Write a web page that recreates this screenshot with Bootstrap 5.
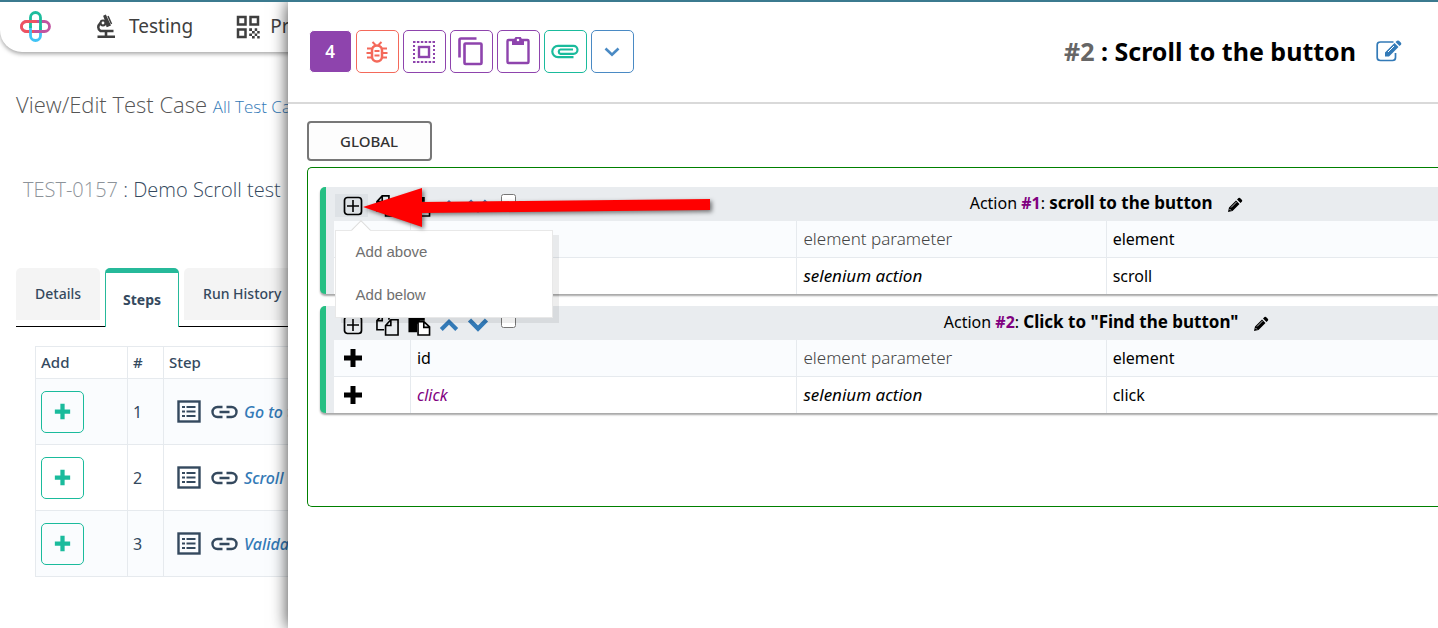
<!DOCTYPE html>
<html lang="en">
<head>
<meta charset="utf-8">
<meta name="viewport" content="width=device-width, initial-scale=1">
<title>View/Edit Test Case</title>
<link href="https://cdn.jsdelivr.net/npm/bootstrap@5.3.0/dist/css/bootstrap.min.css" rel="stylesheet">
<style>
  :root { --teal: #1abb9c; --navy: #34495e; --line: #e6eaee; --blue: #337ab7; --violet: #8e44ad; --bar: #e9ecef; }
  body { font-family: "Noto Sans", sans-serif; font-size: 16px; line-height: 24px; color: #000; border-top: 2px solid #3b7a8f; min-height: 100vh; overflow: hidden; }
  svg { display: block; flex: none; }
  a { text-decoration: none; color: var(--blue); }

  .page-pane { flex: 0 0 20%; overflow: hidden; white-space: nowrap; }
  .top-nav { height: 50px; border-bottom-left-radius: 22px; box-shadow: 0 2px 4px rgba(0,0,0,.35); width: 400px; padding: 0 0 2px 20px; }
  .top-nav a { color: #3f3f3f; font-size: 19px; gap: 10px; }
  .nav-first { margin-left: 43px; margin-right: 42px; }
  .page-title { font-family: "Open Sans", sans-serif; font-size: 22px; font-weight: 300; color: #555; line-height: 32px; margin: 36px 0 0 16px; }
  .page-title a { font-size: 17px; }
  .case-name { font-family: "Open Sans", sans-serif; font-size: 20px; font-weight: 300; color: #34495e; line-height: 28px; margin: 53px 0 0 23px; }
  .case-name span { color: #8d939a; }
  .case-tabs { margin: 64px 0 0 16px; height: 59px; border-bottom: 1px solid #000; width: 400px; font-size: 14px; gap: 5px; }
  .case-tabs a { color: var(--navy); font-weight: 500; background: #f4f4f4; border-radius: 5px 5px 0 0; padding: 0 19px; height: 52px; line-height: 52px; }
  .case-tabs a.current { background: #fff; font-weight: 700; border: 1px solid #26b99a; border-top-width: 5px; border-bottom: 0; height: 59px; line-height: 54px; padding: 0 17px; }
  .steps { margin: 19px 0 0 35px; width: 420px; table-layout: fixed; border-color: var(--line); color: var(--navy); }
  .steps th { font-weight: 500; font-size: 15px; padding: 0 5px 2px; height: 32px; }
  .steps td { height: 66px; padding: 0 5px; vertical-align: middle; font-size: 16px; }
  .steps tbody tr:nth-child(odd) td { background: #fafcfe; }
  .steps .c-add { width: 92px; } .steps .c-num { width: 36px; }
  .add-btn { display: block; width: 43px; height: 42px; border: 1px solid var(--teal); border-radius: 5px; background: transparent; padding: 0; color: var(--teal); }
  .steps a { font-style: italic; font-weight: 500; font-size: 16px; }

  .drawer { min-width: 0; position: relative; z-index: 2; box-shadow: 0 0 16px rgba(0,0,0,.75); min-height: calc(100vh - 2px); }
  .drawer-head { height: 102px; border-bottom: 2px solid #d9d9d9; padding: 28px 36px 0 21px; }
  .tool { width: 43px; height: 43px; border: 1px solid currentColor; border-radius: 5px; background: #fff; padding: 0; }
  .tools { gap: 4px; }
  .violet { color: var(--violet); } .coral { color: #f4695a; } .mint { color: var(--teal); } .sky { color: #4a8ac4; }
  .tool.count { background: var(--violet); color: #fff; font-weight: 600; font-size: 17px; }
  .drawer h2 { font-size: 25px; line-height: 34px; font-weight: 700; }
  .drawer h2 span { color: #666; }
  .drawer-body { padding: 17px 0 0 19px; }
  .global-btn { width: 125px; height: 40px; border: 2px solid #777; border-radius: 4px; background: #fdfdfd; color: #333; font-size: 15px; font-weight: 500; }
  .scope { border: 1px solid green; border-right: 0; border-radius: 5px 0 0 5px; margin-top: 6px; padding: 19px 0 93px 12px; }
  .action-card { border-left: 6px solid #26bf83; border-radius: 5px 0 0 5px; background: var(--bar); padding-left: 8px; box-shadow: 0 2px 2px rgba(0,0,0,.35); margin-bottom: 12px; }
  .params { width: 100%; table-layout: fixed; border-collapse: separate; border-spacing: 0; }
  .params th { height: 34px; font-weight: 400; padding: 0; }
  .params th.caption-cell { padding: 0 23px 2px 0; text-align: center; white-space: nowrap; }
  .params td { height: 36px; padding: 0 6px 1px; background: #fff; border-right: 1px solid var(--line); }
  .params td:first-child { padding-left: 9px; }
  .params td:last-child { border-right: 0; }
  .params tr:nth-child(1) td { background: #fafcfe; height: 37px; border-bottom: 1px solid var(--line); }
  .caption-cell b { font-weight: 700; font-size: 17px; }
  .caption-cell .purple { font-size: 16px; }
  .caption-cell svg { margin-left: 10px; }
  .purple { color: purple; }
  .params .soft { color: #444; font-weight: 300; font-size: 17px; }
  .params .verb { font-size: 17px; }
  .icon-bar { position: relative; height: 34px; padding: 3px 0 0 1px; }
  .icon-bar button { border: 0; background: none; padding: 0; height: 23px; color: #000; }
  .icon-bar .plus-btn { width: 33px; padding-left: 8px; }
  .icon-bar .plus-btn.on { background: #dee2e6; }
  .icon-bar input { width: 15px; height: 15px; margin: 0 0 0 12px; }
  .mini-menu { position: absolute; z-index: 4; top: 43px; left: 1px; width: 218px; height: 88px; background: #fff; border: 1px solid #e8e8e8; box-shadow: 6px 5px 0 rgba(0,0,0,.07); padding: 0 0 0 20px; font-family: "Liberation Sans", Arial, sans-serif; font-size: 15px; }
  .mini-menu a { position: relative; display: block; color: #707070; line-height: 42px; height: 43px; font-weight: 400; }
  .mini-menu::before { content: ""; position: absolute; left: 18px; top: -8px; width: 14px; height: 14px; background: #fff; border: solid #ddd; border-width: 1px 0 0 1px; transform: rotate(45deg); }
  .pointer-arrow { position: absolute; z-index: 5; left: 28px; top: 0; filter: drop-shadow(2px 2px 2px rgba(0,0,0,.5)); pointer-events: none; }
</style>
</head>
<body>
<svg class="d-none" aria-hidden="true">
  <symbol id="i-boxplus" viewBox="0 0 20 20"><rect x="1.5" y="1.5" width="17" height="17" rx="3" fill="none" stroke="currentColor" stroke-width="1.7"/><path d="M10 4v12M4 10h12" stroke="currentColor" stroke-width="1.6"/></symbol>
  <symbol id="i-files" viewBox="0 0 24 24"><g fill="none" stroke="currentColor" stroke-width="1.7"><path d="M8.500 17.500H1V8L6.500 2H13.500V7M6.500 2V8H1"/><path d="M10 13L15.500 7H23V23H10ZM15.500 7V13H10"/></g></symbol>
  <symbol id="i-paste" viewBox="0 0 24 24"><path d="M1 3H6V1H13V3H18V8H13L10 12V20H1Z" fill="currentColor"/><path d="M11 9H17L23 14.500V23H11ZM17 9V15H23" fill="#fff" stroke="currentColor" stroke-width="1.700"/></symbol>
  <symbol id="i-up" viewBox="0 0 22 16"><path d="M2.500 13L11 4.500L19.500 13" fill="none" stroke="#337ab7" stroke-width="4.500"/></symbol>
  <symbol id="i-down" viewBox="0 0 22 16"><path d="M2.500 3L11 11.500L19.500 3" fill="none" stroke="#337ab7" stroke-width="4.500"/></symbol>
  <symbol id="i-plus" viewBox="0 0 20 20"><path d="M10 1v18M1 10h18" stroke="currentColor" stroke-width="5"/></symbol>
  <symbol id="i-pencil" viewBox="0 0 16 16"><path d="M1 15L2 10.500L9 3.500L12.500 7L5.500 14ZM10 2.500L11.500 1Q12.300.5 13 1L15 3Q15.500 3.800 15 4.500L13.500 6Z" fill="currentColor"/><path d="M4 10.500L9.500 5M2.500 12L4 13.500" stroke="#e9ecef" stroke-width=".8"/></symbol>
  <symbol id="i-list" viewBox="0 0 24 24"><rect x="1.500" y="1.500" width="21" height="20" fill="none" stroke="currentColor" stroke-width="2.400"/><path d="M5 7h3M5 11.500h3M5 16h3M9.500 7h9M9.500 11.500h9M9.500 16h9" stroke="currentColor" stroke-width="1.900"/></symbol>
  <symbol id="i-link" viewBox="0 0 26 14"><path d="M11 2H6A5 5 0 0 0 6 12H11M15 2H20A5 5 0 0 1 20 12H15M8 7H18" fill="none" stroke="currentColor" stroke-width="2.400"/></symbol>
</svg>

<div class="d-flex">
  <section class="page-pane">
    <nav class="top-nav d-flex align-items-center bg-white">
      <svg width="31" height="31" viewBox="0 0 31 31" fill="none" stroke-width="2.800"><rect x="1.500" y="10.500" width="28" height="10" rx="5" stroke="#c054a0"/><path d="M16 10.500H6.500A5 5 0 0 0 6.500 20.500H16" stroke="#ef5360"/><path d="M10.500 15V24.500A5 5 0 0 0 20.500 24.500V15" stroke="#3fc3f5"/><path d="M10.500 17V6.500A5 5 0 0 1 20.500 6.500V19" stroke="#1dbd9d"/><path d="M8 10.500H17" stroke="#ef5360"/><path d="M14 20.500H24" stroke="#c054a0"/></svg>
      <a href="#" class="nav-first d-flex align-items-center">
        <svg width="25" height="25" viewBox="0 0 25 25" fill="none" stroke="currentColor"><path d="M3.500 22.800H21M12 22V17.500" stroke-width="2.600"/><path d="M6.500 9Q2 13.500 6.500 17H19.500" stroke-width="2.500"/><path d="M9.500 2.500L11.500 1.500L16 11L12.500 12.500" fill="currentColor" stroke-width="1.500"/><circle cx="9" cy="9" r="2.400" fill="#fff" stroke-width="2"/><path d="M14 2L17.500 10" stroke-width="1.500"/></svg>
        <span>Testing</span></a>
      <a href="#" class="d-flex align-items-center">
        <svg width="25" height="25" viewBox="0 0 25 25" fill="none" stroke="currentColor" stroke-width="2.500"><path d="M3 3h7.500v7.500H3zM15.500 3H23v7.500h-7.500zM3 15.500h7.500V23H3z"/><path d="M14.200 15.600h2.800m2.700 0h2.500M17 18.200h2.700m2.500 0h2.500M14.200 20.800H17m2.700 0h2.500M17 23.200h2.700m2.500 0h2.500" stroke-width="2.600"/></svg>
        <span>Projects</span></a>
    </nav>
    <h1 class="page-title">View/Edit Test Case <a href="#">All Test Cases</a></h1>
    <p class="case-name mb-0"><span>TEST-0157</span> : Demo Scroll test</p>
    <div class="case-tabs d-flex">
      <a href="#">Details</a><a href="#" class="current">Steps</a><a href="#">Run History</a>
    </div>
    <table class="steps table-bordered">
      <thead><tr><th class="c-add">Add</th><th class="c-num">#</th><th>Step</th></tr></thead>
      <tbody>
        <tr><td><button class="add-btn" aria-label="Add step"><svg class="m-auto" width="17" height="17"><use href="#i-plus"/></svg></button></td><td>1</td>
          <td><div class="d-flex align-items-center ps-2"><svg width="24" height="24"><use href="#i-list"/></svg><svg class="ms-2 me-1" width="31" height="14"><use href="#i-link"/></svg><a href="#">Go to the page</a></div></td></tr>
        <tr><td><button class="add-btn" aria-label="Add step"><svg class="m-auto" width="17" height="17"><use href="#i-plus"/></svg></button></td><td>2</td>
          <td><div class="d-flex align-items-center ps-2"><svg width="24" height="24"><use href="#i-list"/></svg><svg class="ms-2 me-1" width="31" height="14"><use href="#i-link"/></svg><a href="#">Scroll to the button</a></div></td></tr>
        <tr><td><button class="add-btn" aria-label="Add step"><svg class="m-auto" width="17" height="17"><use href="#i-plus"/></svg></button></td><td>3</td>
          <td><div class="d-flex align-items-center ps-2"><svg width="24" height="24"><use href="#i-list"/></svg><svg class="ms-2 me-1" width="31" height="14"><use href="#i-link"/></svg><a href="#">Validate</a></div></td></tr>
      </tbody>
    </table>
  </section>

  <main class="drawer flex-grow-1 bg-white">
    <header class="drawer-head d-flex justify-content-between align-items-start">
      <div class="tools d-flex">
        <button class="tool count">4</button>
        <button class="tool coral" aria-label="Debug"><svg class="m-auto" width="24" height="24" viewBox="0 0 24 24" fill="none" stroke="currentColor"><path d="M12 5.500C8.500 5.500 7 8 7 10.500V16.500A5 5 0 0 0 17 16.500V10.500C17 8 15.500 5.500 12 5.500Z" stroke-width="2.500"/><path d="M7.500 2L10.500 5M16.500 2L13.500 5M2 8.500H7M17 8.500H22M1.500 13H7M17 13H22.500M2 17.500H7M17 17.500H22M9.500 11H14.500M9.500 15.500H14.500" stroke-width="2"/></svg></button>
        <button class="tool violet" aria-label="Select all"><svg class="m-auto" width="24" height="24" viewBox="0 0 24 24" fill="none" stroke="currentColor" stroke-width="2"><path d="M1 2H23M1 22H23" stroke-dasharray="2.500 1.400"/><path d="M2 5V20M22 5V20" stroke-dasharray="2 2"/><rect x="7" y="7" width="10" height="10" stroke-width="2.400"/></svg></button>
        <button class="tool violet" aria-label="Copy"><svg class="m-auto" width="28" height="30" viewBox="0 0 28 30" fill="none" stroke="currentColor" stroke-width="2.600"><path d="M2.500 20.500V3Q2.500 1.500 4 1.500H19.500"/><rect x="7.500" y="6.500" width="17" height="20.500" rx="1"/></svg></button>
        <button class="tool violet" aria-label="Paste"><svg class="m-auto" width="26" height="30" viewBox="0 0 26 30" fill="none" stroke="currentColor" stroke-width="2.400"><rect x="2.500" y="3" width="21" height="23" rx="1"/><path d="M7 3H10A3 2.800 0 0 1 16 3H19V8H7Z" fill="currentColor" stroke="none"/><circle cx="13" cy="3" r="2.600"/><circle cx="13" cy="3" r="1.300" fill="#fff" stroke="none"/></svg></button>
        <button class="tool mint" aria-label="Attach"><svg class="m-auto" width="28" height="15" viewBox="0 0 28 15" fill="none" stroke="currentColor" stroke-width="2.200"><path d="M22.500 13.200H7A5.700 5.700 0 0 1 7 1.800H22.500A4 4 0 0 1 22.500 9.800H9.500A2.200 2.200 0 0 1 9.500 5.500H22"/></svg></button>
        <button class="tool sky" aria-label="More"><svg class="m-auto" width="16" height="12" viewBox="0 0 16 12"><path d="M1.500 2.500L8 8.800L14.500 2.500" fill="none" stroke="currentColor" stroke-width="2.600"/></svg></button>
      </div>
      <div class="d-flex align-items-center pt-1">
        <h2 class="mb-0"><span>#2</span> : Scroll to the button</h2>
        <a href="#" class="ms-3 ps-1" aria-label="Edit title"><svg width="26" height="22" viewBox="0 0 26 22"><path d="M17.500 2H4.500Q1.200 2 1.200 5V17.500Q1.200 20.500 4.500 20.500H16.500Q19.500 20.500 19.500 17.500V13" fill="none" stroke="currentColor" stroke-width="1.700"/><path d="M9 16.500V12.500L18.500 3L22.500 7L13 16.500ZM19.500 2L21 .8Q22 0 23 .8L25 2.800Q25.700 3.800 25 4.700L23.500 6Z" fill="currentColor"/><path d="M12 12L18 6" stroke="#fff"/></svg></a>
      </div>
    </header>

    <div class="drawer-body">
      <button class="global-btn">GLOBAL</button>
      <div class="scope">
        <div class="action-card">
          <table class="params">
            <colgroup><col style="width:7%"><col style="width:35%"><col style="width:28%"><col style="width:30%"></colgroup>
            <thead><tr>
              <th colspan="2"><div class="icon-bar d-flex align-items-center">
                <button class="plus-btn on" aria-label="Add action"><svg width="20" height="20"><use href="#i-boxplus"/></svg></button>
                <button class="ms-2" aria-label="Copy action"><svg width="23" height="23"><use href="#i-files"/></svg></button>
                <button class="ms-2" aria-label="Paste action"><svg width="24" height="23"><use href="#i-paste"/></svg></button>
                <button class="ms-1 ps-1" aria-label="Move up"><svg width="20" height="22"><use href="#i-up"/></svg></button>
                <button class="ms-2" aria-label="Move down"><svg width="22" height="22"><use href="#i-down"/></svg></button>
                <input class="align-self-start mt-1" type="checkbox" aria-label="Select action 1">
                <div class="mini-menu"><a href="#">Add above</a><a href="#">Add below</a></div>
                <svg class="pointer-arrow" width="352" height="42" viewBox="0 0 352 42"><path d="M1 20L60 1V15L348 12V23L60 26V40Z" fill="red"/></svg>
              </div></th>
              <th colspan="2" class="caption-cell">Action <b class="purple">#1</b>: <b>scroll to the button</b> <svg class="d-inline-block" width="16" height="16"><use href="#i-pencil"/></svg></th>
            </tr></thead>
            <tbody>
              <tr><td></td><td></td><td class="soft">element parameter</td><td>element</td></tr>
              <tr><td></td><td></td><td class="verb"><i>selenium action</i></td><td>scroll</td></tr>
            </tbody>
          </table>
        </div>
        <div class="action-card mb-0">
          <table class="params">
            <colgroup><col style="width:7%"><col style="width:35%"><col style="width:28%"><col style="width:30%"></colgroup>
            <thead><tr>
              <th colspan="2"><div class="icon-bar d-flex align-items-center">
                <button class="plus-btn" aria-label="Add action"><svg width="20" height="20"><use href="#i-boxplus"/></svg></button>
                <button class="ms-2" aria-label="Copy action"><svg width="23" height="23"><use href="#i-files"/></svg></button>
                <button class="ms-2" aria-label="Paste action"><svg width="24" height="23"><use href="#i-paste"/></svg></button>
                <button class="ms-1 ps-1" aria-label="Move up"><svg width="20" height="22"><use href="#i-up"/></svg></button>
                <button class="ms-2" aria-label="Move down"><svg width="22" height="22"><use href="#i-down"/></svg></button>
                <input class="align-self-start mt-1" type="checkbox" aria-label="Select action 2">
              </div></th>
              <th colspan="2" class="caption-cell">Action <b class="purple">#2</b>: <b>Click to "Find the button"</b> <svg class="d-inline-block" width="16" height="16"><use href="#i-pencil"/></svg></th>
            </tr></thead>
            <tbody>
              <tr><td><svg width="20" height="20"><use href="#i-plus"/></svg></td><td>id</td><td class="soft">element parameter</td><td>element</td></tr>
              <tr><td><svg width="20" height="20"><use href="#i-plus"/></svg></td><td><i class="purple">click</i></td><td class="verb"><i>selenium action</i></td><td>click</td></tr>
            </tbody>
          </table>
        </div>
      </div>
    </div>
  </main>
</div>
<script src="https://cdn.jsdelivr.net/npm/bootstrap@5.3.0/dist/js/bootstrap.bundle.min.js"></script>
</body>
</html>
